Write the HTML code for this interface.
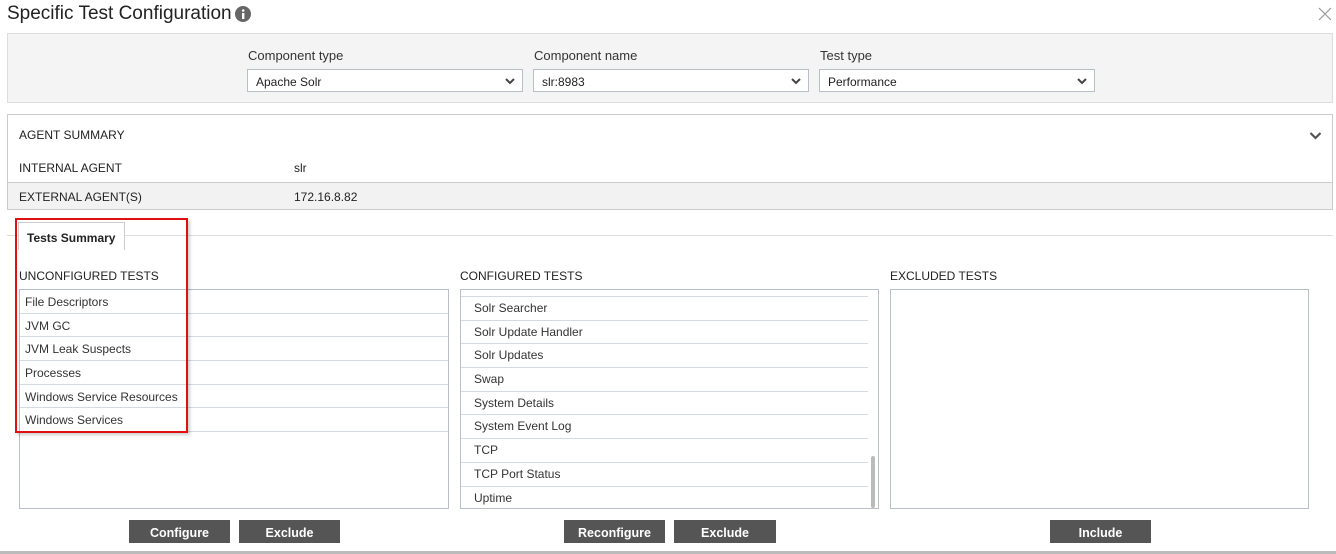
<!DOCTYPE html>
<html><head><style>
*{box-sizing:border-box;margin:0;padding:0}
body{width:1336px;height:554px;background:#fff;font-family:"Liberation Sans",sans-serif;color:#333;position:relative;overflow:hidden;font-size:12px}
.a{position:absolute}
.sel{position:absolute;top:69px;height:23px;border:1px solid #b9bec9;background:#fff;padding:5px 8px;font-size:12px;color:#222}
.sel svg{position:absolute;right:7px;top:7px}
.lbl{position:absolute;top:48px;font-size:13px;color:#333}
.list{position:absolute;top:289px;height:220px;border:1px solid #b9bec9;background:#fff;overflow:hidden}
.row{height:23.7px;border-bottom:1px solid #d5d9e0;padding:5px 0 0 5px;font-size:12px;color:#333}
.btn{position:absolute;top:520px;height:23px;background:#555;color:#fff;font-weight:bold;font-size:12.5px;text-align:center;line-height:27px;width:101px}
.hd{position:absolute;top:269px;font-size:12px;color:#222}
</style></head><body>
<div class="a" style="left:7px;top:3px;font-size:19px;color:#222">Specific Test Configuration</div>
<svg class="a" style="left:235px;top:6px" width="16" height="16"><circle cx="8" cy="8" r="8" fill="#666"/><rect x="7" y="7" width="2.4" height="6" fill="#fff"/><circle cx="8.2" cy="4.5" r="1.3" fill="#fff"/></svg>
<svg class="a" style="left:1318px;top:7px" width="14" height="14"><path d="M1 1L13 13M13 1L1 13" stroke="#999" stroke-width="1.2"/></svg>

<div class="a" style="left:7px;top:33px;width:1326px;height:70px;background:#f4f4f4;border:1px solid #ddd"></div>
<div class="lbl" style="left:248px">Component type</div>
<div class="lbl" style="left:534px">Component name</div>
<div class="lbl" style="left:820px">Test type</div>
<div class="sel" style="left:247px;width:276px">Apache Solr<svg width="10" height="8"><path d="M1 2L5 6L9 2" stroke="#444" stroke-width="2" fill="none"/></svg></div>
<div class="sel" style="left:533px;width:276px">slr:8983<svg width="10" height="8"><path d="M1 2L5 6L9 2" stroke="#444" stroke-width="2" fill="none"/></svg></div>
<div class="sel" style="left:819px;width:276px">Performance<svg width="10" height="8"><path d="M1 2L5 6L9 2" stroke="#444" stroke-width="2" fill="none"/></svg></div>

<div class="a" style="left:7px;top:114px;width:1326px;height:96px;border:1px solid #ccc"></div>
<div class="a" style="left:8px;top:182px;width:1324px;height:27px;background:#f2f2f2;border-top:1px solid #ccc"></div>
<div class="a" style="left:19px;top:128px;font-size:12px;color:#222">AGENT SUMMARY</div>
<svg class="a" style="left:1309px;top:131px" width="13" height="9"><path d="M1.5 2L6.5 7L11.5 2" stroke="#555" stroke-width="2.2" fill="none"/></svg>
<div class="a" style="left:19px;top:161px;color:#222">INTERNAL AGENT</div>
<div class="a" style="left:294px;top:161px;color:#222">slr</div>
<div class="a" style="left:19px;top:190px;color:#222">EXTERNAL AGENT(S)</div>
<div class="a" style="left:294px;top:190px;color:#222">172.16.8.82</div>

<div class="a" style="left:7px;top:235px;width:1326px;height:1px;background:#ddd"></div>
<div class="a" style="left:18px;top:222px;width:107px;height:28px;border:1px solid #ccc;border-bottom:none;background:#fff;font-weight:bold;font-size:12px;padding:8px 0 0 8px;color:#222">Tests Summary</div>

<div class="hd" style="left:19px">UNCONFIGURED TESTS</div>
<div class="hd" style="left:460px">CONFIGURED TESTS</div>
<div class="hd" style="left:890px">EXCLUDED TESTS</div>

<div class="list" style="left:19px;width:430px">
<div class="row">File Descriptors</div><div class="row">JVM GC</div><div class="row">JVM Leak Suspects</div><div class="row">Processes</div><div class="row">Windows Service Resources</div><div class="row">Windows Services</div>
</div>
<div class="list" style="left:460px;width:419px">
<div style="width:407px">
<div class="row" style="height:7px;padding:0"></div>
<div class="row" style="padding-left:13px;padding-top:4px">Solr Searcher</div><div class="row" style="padding-left:13px;padding-top:4px">Solr Update Handler</div><div class="row" style="padding-left:13px;padding-top:4px">Solr Updates</div><div class="row" style="padding-left:13px;padding-top:4px">Swap</div><div class="row" style="padding-left:13px;padding-top:4px">System Details</div><div class="row" style="padding-left:13px;padding-top:4px">System Event Log</div><div class="row" style="padding-left:13px;padding-top:4px">TCP</div><div class="row" style="padding-left:13px;padding-top:4px">TCP Port Status</div><div class="row" style="padding-left:13px;padding-top:4px;border:none">Uptime</div>
</div>
<div class="a" style="left:410px;top:166px;width:4px;height:52px;background:#bbb;border-radius:2px"></div>
</div>
<div class="list" style="left:890px;width:419px"></div>

<div class="a" style="left:15px;top:218px;width:173px;height:215px;border:2px solid #e01010;box-shadow:2px 2px 3px rgba(0,0,0,.2)"></div>

<div class="btn" style="left:129px">Configure</div>
<div class="btn" style="left:239px">Exclude</div>
<div class="btn" style="left:564px">Reconfigure</div>
<div class="btn" style="left:674px;width:102px">Exclude</div>
<div class="btn" style="left:1050px">Include</div>
<div class="a" style="left:0;top:551px;width:1336px;height:3px;background:#bbb"></div>
</body></html>
